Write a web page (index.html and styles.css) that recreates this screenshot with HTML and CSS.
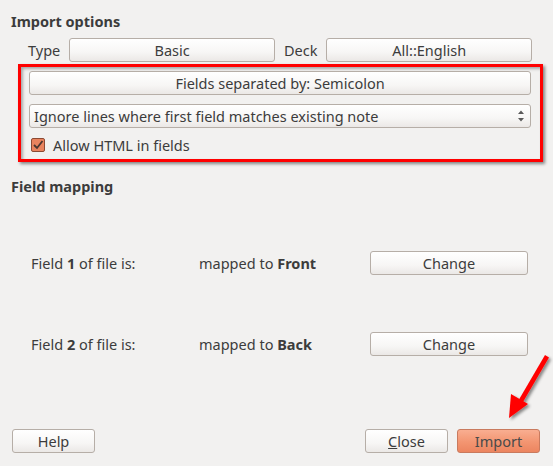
FILE: index.html
```html
<!DOCTYPE html>
<html>
<head>
<meta charset="utf-8">
<link rel="stylesheet" href="styles.css">
</head>
<body>
<div class="dialog">
  <div class="heading">Import options</div>
  <div class="type-row">
    <span class="lbl">Type</span>
    <button class="btn grow">Basic</button>
    <span class="lbl">Deck</span>
    <button class="btn grow">All::English</button>
  </div>
  <div class="highlight">
    <button class="btn full">Fields separated by: Semicolon</button>
    <div class="select">
      <span>Ignore lines where first field matches existing note</span>
      <svg class="spin" width="8" height="14" viewBox="0 0 8 14"><path d="M1 5 L4 1.5 L7 5 Z M1 9 L4 12.5 L7 9 Z" fill="#5a5a5a"/></svg>
    </div>
    <label class="check">
      <svg width="14" height="14" viewBox="0 0 14 14"><rect x="0.5" y="0.5" width="13" height="13" rx="1.5" fill="#e9835e" stroke="#8c4a33"/><path d="M3 7 L6 10 L11.5 3" fill="none" stroke="#4a3630" stroke-width="1.8"/></svg>
      <span>Allow HTML in fields</span>
    </label>
  </div>
  <div class="heading map-heading">Field mapping</div>
  <div class="map-row">
    <span>Field <b>1</b> of file is:</span>
    <span>mapped to <b>Front</b></span>
    <button class="btn">Change</button>
  </div>
  <div class="map-row second">
    <span>Field <b>2</b> of file is:</span>
    <span>mapped to <b>Back</b></span>
    <button class="btn">Change</button>
  </div>
  <div class="footer">
    <button class="btn foot">Help</button>
    <div class="spacer"></div>
    <button class="btn foot"><u>C</u>lose</button>
    <button class="btn foot primary">Import</button>
  </div>
  <svg class="arrow" width="60" height="80" viewBox="0 0 60 80">
    <defs>
      <filter id="sh" x="-30%" y="-30%" width="160%" height="160%">
        <feDropShadow dx="2" dy="2" stdDeviation="1.5" flood-color="#000" flood-opacity="0.45"/>
      </filter>
    </defs>
    <g filter="url(#sh)" fill="#ff0000">
      <polygon points="51,3 55,5.5 29,50 25,47.5"/>
      <polygon points="15,66 17,42 34,52"/>
    </g>
  </svg>
</div>
</body>
</html>
```

FILE: styles.css
```css
html, body {
  margin: 0;
  padding: 0;
}
body {
  width: 553px;
  height: 466px;
  background: #f2f1f0;
  font-family: "Noto Sans", "Open Sans", sans-serif;
  font-size: 14.5px;
  color: #3c3c3c;
  overflow: hidden;
}
.dialog {
  position: relative;
  height: 466px;
  box-sizing: border-box;
  padding: 12px 0 0 0;
}
.heading {
  font-weight: bold;
  margin-left: 11px;
  line-height: 18px;
  height: 18px;
}
.btn {
  font-family: inherit;
  font-size: 14.5px;
  color: #3c3c3c;
  height: 24px;
  box-sizing: border-box;
  border: 1px solid #b6aea7;
  border-radius: 3px;
  background: linear-gradient(#ffffff 0%, #f7f6f5 60%, #ebe8e6 100%);
  padding: 0 8px;
  line-height: 20px;
  cursor: default;
}
.type-row {
  display: flex;
  align-items: center;
  margin: 8px 21px 0 28px;
  gap: 9px;
}
.grow {
  flex: 1;
}
.highlight {
  margin: 2px 10px 0 18px;
  border: 3px solid #ff0000;
  box-shadow: 2px 2px 3px rgba(0,0,0,0.45), inset 2px 2px 3px rgba(0,0,0,0.3);
  padding: 4px 9px 7px 8px;
  display: flex;
  flex-direction: column;
}
.full {
  width: 100%;
}
.select {
  margin-top: 9px;
  height: 24px;
  box-sizing: border-box;
  border: 1px solid #b6aea7;
  border-radius: 3px;
  background: linear-gradient(#ffffff 0%, #f7f6f5 60%, #ebe8e6 100%);
  display: flex;
  align-items: center;
  justify-content: space-between;
  padding: 0 5px 0 4px;
}
.check {
  display: flex;
  align-items: center;
  gap: 8px;
  margin: 10px 0 0 2px;
  height: 14px;
}
.map-heading {
  margin-top: 15px;
}
.map-row {
  display: grid;
  grid-template-columns: 168px 171px 158px;
  align-items: center;
  margin: 56px 0 0 31px;
}
.map-row.second {
  margin-top: 57px;
}
.footer {
  position: absolute;
  left: 12px;
  right: 13px;
  top: 429px;
  display: flex;
  gap: 9px;
}
.spacer {
  flex: 1;
}
.foot {
  width: 83px;
}
.foot u {
  text-decoration: underline;
}
.primary {
  background: linear-gradient(#f9ae91 0%, #f39571 55%, #ec8560 100%);
  border-color: #c97a5e;
  color: #4a4a4a;
}
.arrow {
  position: absolute;
  left: 494px;
  top: 352px;
}
```
